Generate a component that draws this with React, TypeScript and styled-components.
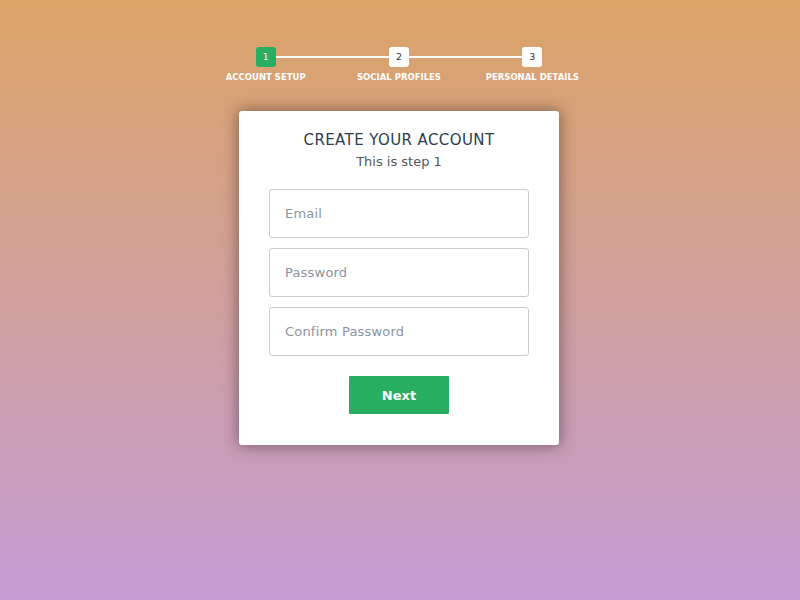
import styled, { createGlobalStyle } from 'styled-components';

const GlobalStyle = createGlobalStyle`
  html, body {
    margin: 0;
    height: 100%;
  }
  body {
    font-family: "DejaVu Sans", "Liberation Sans", sans-serif;
    background: linear-gradient(rgba(196, 102, 0, 0.6), rgba(155, 89, 182, 0.6)), #fff;
    min-height: 600px;
  }
`;

const steps = ['Account Setup', 'Social Profiles', 'Personal Details'];

const Page = styled.div`
  width: 400px;
  margin: 0 0 0 calc(50% - 201px);
  padding-top: 47px;
`;

const Progress = styled.ol`
  list-style: none;
  margin: 0 0 28px;
  padding: 0;
  display: flex;
  position: relative;
`;

const Step = styled.li<{ $first: boolean }>`
  flex: 1;
  display: flex;
  flex-direction: column;
  align-items: center;
  position: relative;
  font-size: 8.5px;
  line-height: 12px;
  font-weight: bold;
  text-transform: uppercase;
  color: #fff;

  &::after {
    content: '';
    display: ${(p) => (p.$first ? 'none' : 'block')};
    position: absolute;
    top: 9px;
    left: -50%;
    width: 100%;
    height: 2px;
    background: #fff;
    z-index: 0;
  }
`;

const Badge = styled.span<{ $active: boolean }>`
  position: relative;
  z-index: 1;
  width: 20px;
  height: 20px;
  line-height: 20px;
  text-align: center;
  border-radius: 3px;
  font-size: 9.5px;
  font-weight: normal;
  color: ${(p) => (p.$active ? '#fff' : '#333')};
  background: ${(p) => (p.$active ? '#27AE60' : '#fff')};
  margin-bottom: 4px;
`;

const Card = styled.form`
  width: 320px;
  margin: 0 auto;
  background: #fff;
  border-radius: 3px;
  box-shadow: 0 0 15px 1px rgba(0, 0, 0, 0.4);
  padding: 20px 30px 31px;
  box-sizing: border-box;
  display: flex;
  flex-direction: column;
  align-items: center;
`;

const Title = styled.h2`
  margin: 0 0 5px;
  font-size: 15px;
  line-height: 18px;
  letter-spacing: 0.4px;
  font-weight: normal;
  text-transform: uppercase;
  color: #2c3e50;
`;

const Subtitle = styled.h3`
  margin: 0 0 19px;
  font-size: 13px;
  line-height: 16px;
  font-weight: normal;
  color: #555;
`;

const Field = styled.input`
  width: 100%;
  box-sizing: border-box;
  height: 49px;
  padding: 15px;
  margin: 0 0 10px;
  border: 1px solid #ccc;
  border-radius: 3px;
  font-family: inherit;
  font-size: 13px;
  letter-spacing: 0.2px;
  color: #2c3e50;

  &::placeholder {
    color: #8a94a0;
  }
`;

const NextButton = styled.button`
  width: 100px;
  height: 38px;
  margin-top: 10px;
  border: 0;
  border-radius: 1px;
  background: #27ae60;
  color: #fff;
  font-family: inherit;
  font-weight: bold;
  font-size: 13px;
  cursor: pointer;
`;

export default function App() {
  return (
    <>
      <GlobalStyle />
      <Page>
        <Progress>
          {steps.map((s, i) => (
            <Step key={s} $first={i === 0}>
              <Badge $active={i === 0}>{i + 1}</Badge>
              {s}
            </Step>
          ))}
        </Progress>
        <Card onSubmit={(e) => e.preventDefault()}>
          <Title>Create your account</Title>
          <Subtitle>This is step 1</Subtitle>
          <Field type="text" placeholder="Email" />
          <Field type="password" placeholder="Password" />
          <Field type="password" placeholder="Confirm Password" />
          <NextButton type="button">Next</NextButton>
        </Card>
      </Page>
    </>
  );
}
